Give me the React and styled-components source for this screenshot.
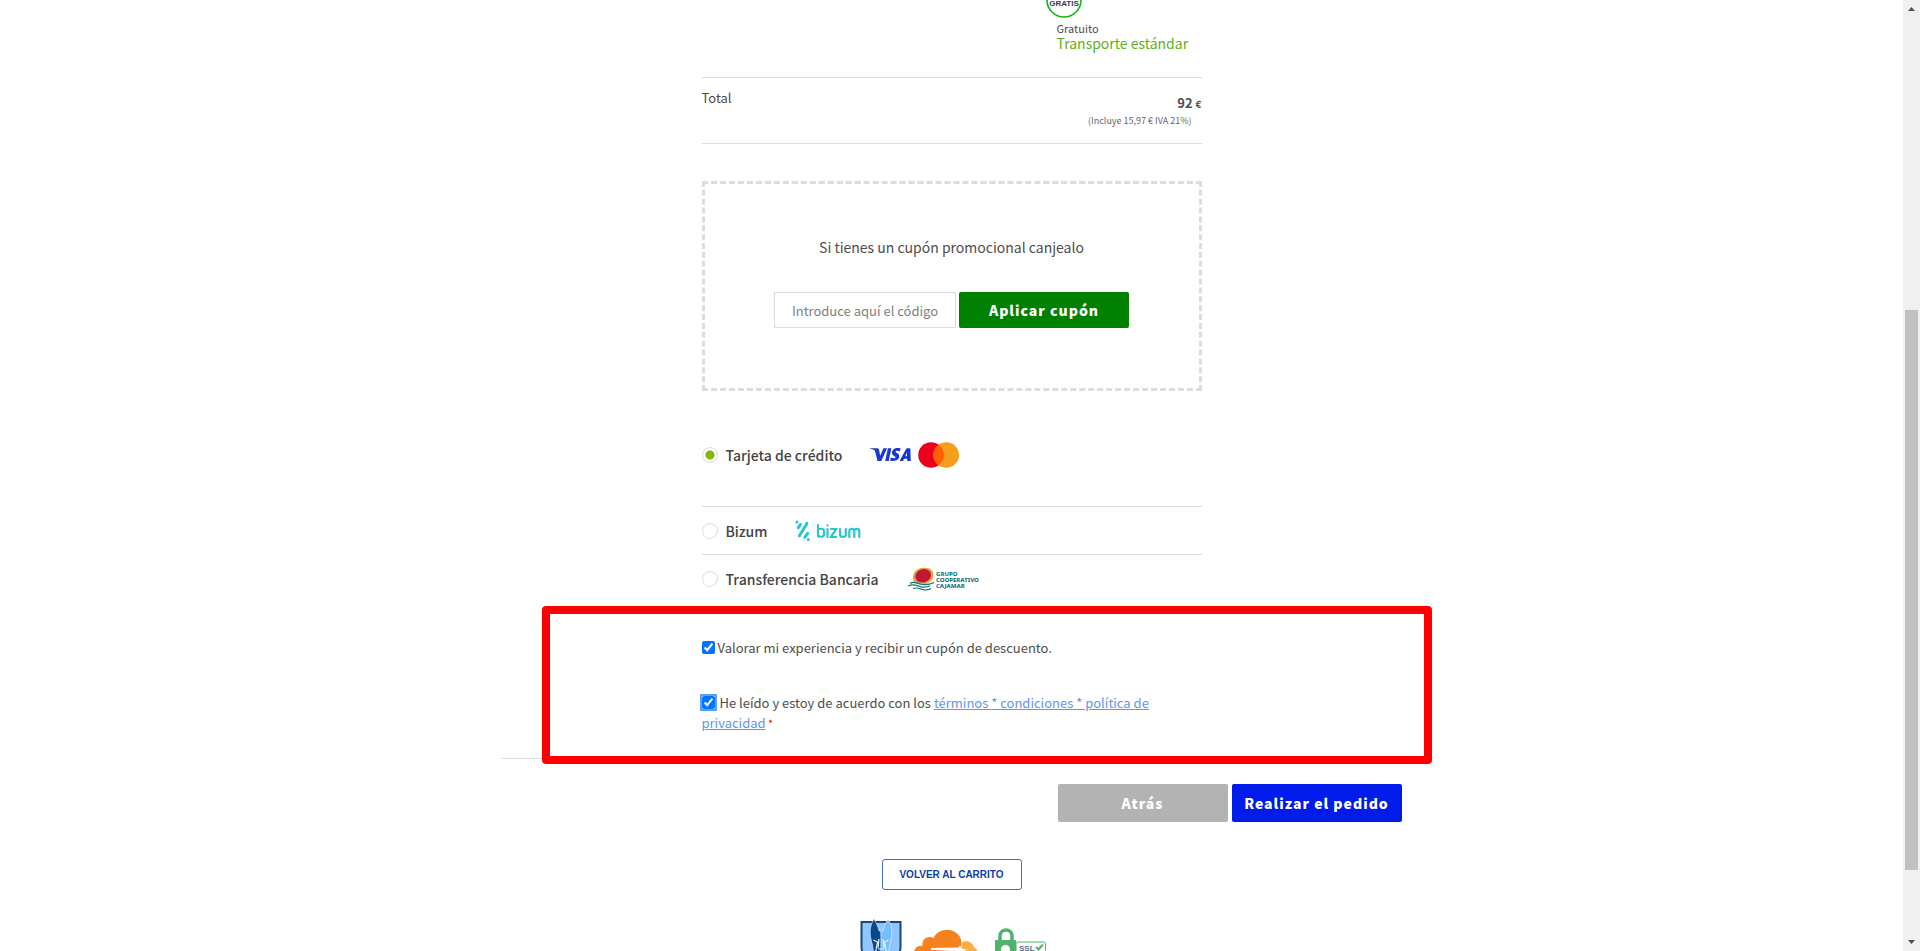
import React, { useState } from 'react';
import styled, { createGlobalStyle, css } from 'styled-components';

const GlobalStyle = createGlobalStyle`
  * {
    box-sizing: border-box;
  }
  body {
    margin: 0;
    overflow: hidden;
    background: #fff;
    color: #4d4d4d;
    font-family: 'Noto Sans CJK SC', 'Noto Sans', sans-serif;
    font-size: 13px;
    line-height: 20px;
  }
  button,
  input {
    font-family: inherit;
  }
`;

const Screen = styled.div`
  display: flex;
  height: 100vh;
  overflow: hidden;
`;

const Page = styled.main`
  flex: 1;
  min-width: 0;
  margin-top: -20px;
`;

const Checkout = styled.form`
  max-width: 900px;
  margin: 0 auto;
`;

const Column = styled.div`
  max-width: 500px;
  margin: 0 auto;
`;

const SummaryRow = styled.section`
  display: flex;
  justify-content: space-between;
  border-bottom: 1px solid #ddd;
  padding: ${(props) => props.$padding};
`;

const SummaryLabel = styled.span`
  font-size: 13px;
  line-height: 20px;
`;

const Shipping = styled.div`
  width: 156px;
`;

const FreeBadge = styled.svg`
  display: block;
  width: 36px;
  height: 36px;
  margin-bottom: 3px;
`;

const ShippingText = styled.div`
  padding-left: 11px;
  font-size: ${(props) => (props.$accent ? 14 : 11)}px;
  line-height: 15px;
  ${(props) => props.$accent && css`
    color: #5fb020;
  `}
`;

const Totals = styled.div`
  padding-top: 5px;
  text-align: right;
`;

const Price = styled.strong`
  display: block;
  font-size: 13px;
  line-height: 20px;

  small {
    font-size: 10px;
  }
`;

const Tax = styled.div`
  padding-right: 10px;
  color: #666;
  font-size: 9px;
  line-height: 14px;
`;

const Coupon = styled.section`
  display: flex;
  flex-direction: column;
  align-items: center;
  gap: 34px;
  margin-top: 37px;
  border: 3px dashed #ddd;
  padding: 52px 20px 60px;
`;

const CouponTitle = styled.label`
  font-size: 14px;
  line-height: 22px;
`;

const CouponFields = styled.div`
  display: flex;
  gap: 3px;
`;

const CouponInput = styled.input`
  width: 182px;
  height: 36px;
  border: 1px solid #ddd;
  padding: 0 10px;
  color: #4d4d4d;
  font-size: 13px;
  text-align: center;

  &::placeholder {
    color: #808080;
    opacity: 1;
  }
`;

const Button = styled.button`
  width: 170px;
  height: ${(props) => (props.$tall ? 38 : 36)}px;
  border: 0;
  border-radius: 2px;
  padding: 0;
  background: ${(props) => props.$color};
  color: #fff;
  font-size: 14px;
  font-weight: 900;
  letter-spacing: 1px;
`;

const Methods = styled.section`
  margin-top: 40px;
`;

const Method = styled.label`
  display: flex;
  align-items: center;
  min-height: 48px;
  color: #444;
  font-size: 14px;
  font-weight: 500;
  line-height: 24px;

  & + & {
    border-top: 1px solid #ddd;
  }
  ${(props) => props.$first && css`
    padding: 11px 0 38px;
  `}
`;

const Radio = styled.input`
  appearance: none;
  flex: none;
  width: 16px;
  height: 16px;
  margin: 0 8px 0 0;
  border: 1px solid #ddd;
  border-radius: 50%;
  background: #fff;

  &:checked {
    background: radial-gradient(circle, #83b800 0 4px, #fff 5px);
  }
`;

const MethodLogo = styled.svg`
  flex: none;
  margin-left: 28px;
`;

const Agreement = styled.section`
  position: relative;
  border-bottom: 1px solid #ddd;
  padding: 36px 0 25px;
`;

const Highlight = styled.div`
  position: absolute;
  top: 4px;
  right: -30px;
  bottom: -6px;
  left: 40px;
  border: 8px solid #f00;
  border-radius: 4px;
  pointer-events: none;
`;

const Consent = styled.div`
  max-width: 460px;
  color: #4d4d4d;
  font-size: 13px;
  line-height: 20px;

  & + & {
    margin-top: 35px;
  }
`;

const Checkbox = styled.input`
  width: 13px;
  height: 13px;
  margin: 0 ${(props) => (props.$focused ? 5 : 3)}px 0 0;
  accent-color: #0075ff;
  vertical-align: -1px;
  ${(props) => props.$focused && css`
    outline: 2px solid #5e9ef5;
  `}
`;

const TermsLink = styled.a`
  color: #6495ed;
  text-decoration: underline;
`;

const Required = styled.span`
  color: #f00;
  font-size: 11px;
`;

const Actions = styled.div`
  display: flex;
  justify-content: flex-end;
  gap: 4px;
  margin-top: 25px;
`;

const Footer = styled.footer`
  display: flex;
  flex-direction: column;
  align-items: center;
  gap: 28px;
  margin-top: 37px;
`;

const CartLink = styled.a`
  width: 140px;
  border: 1px solid #4468b5;
  border-radius: 3px;
  color: #0d3fa3;
  font-family: 'Liberation Sans', Arial, sans-serif;
  font-size: 10px;
  font-weight: 700;
  line-height: 29px;
  text-align: center;
  text-decoration: none;
`;

const Seals = styled.svg`
  width: 188px;
  height: 50px;
`;

const Scrollbar = styled.div`
  display: flex;
  flex: none;
  flex-direction: column;
  width: 17px;
  background: #f0f0f0;
`;

const ScrollArrow = styled.svg`
  display: block;
  width: 17px;
  height: 17px;
`;

const Track = styled.div`
  flex: 1;
  padding: 0 2px;
`;

const Thumb = styled.div`
  height: 100%;
  background: linear-gradient(transparent 32%, #c1c1c1 32% 93%, transparent 93%);
`;

const CardLogos = () => (
  <MethodLogo width="90" height="26" viewBox="0 0 90 26" aria-label="Visa Mastercard">
    <g fill="#1838cf">
      <path d="M0 6.2h7.1c1 0 1.7.5 1.9 1.5l1.2 6.1 3.2-7.6h3.7L11.300 19H7.600L4.900 8.800C4.100 7.700 2.300 7.100 0 6.700z" />
      <path d="M17.900 6.200h3.500L18.700 19h-3.500z" />
      <path d="M30.500 6.600 29.900 9.400c-1.700-.8-4.200-.8-4.300.3-.1 1.200 4 1.500 3.700 4.900-.3 3.500-4.900 5.400-9.200 3.800l.7-3c1.800 1 4.700 1.200 4.800 0 .1-1.300-3.900-1.600-3.600-4.900.3-3.900 5.100-5.200 8.500-3.900z" />
      <path fillRule="evenodd" d="m29.600 19 6.200-11.600c.4-.8.900-1.200 1.700-1.200h2.800L40.800 19h-3.500l-.2-2.200H34L33 19zm5.700-4.700h1.700l-.2-3.900z" />
    </g>
    <circle cx="61" cy="13" r="12.800" fill="#eb001b" />
    <circle cx="76.200" cy="13" r="12.800" fill="#f79e1b" />
    <path fill="#ff5f00" d="M68.600 2.700a12.800 12.800 0 0 1 0 20.600 12.800 12.800 0 0 1 0-20.600z" />
  </MethodLogo>
);

const BizumLogo = () => (
  <MethodLogo width="68" height="22" viewBox="0 0 68 22" aria-label="Bizum">
    <g fill="none" stroke="#2bc4cf" strokeLinecap="round">
      <g strokeWidth="3">
        <path d="M3.300 7.700 5.500 4.400M4.400 15.800l7.600-12.400M9.800 17.300l2.800-4" />
        <path d="M1.900 1.900h.1M13.200 19.600h.1" />
      </g>
      <g strokeWidth="2.200">
        <path d="M23 5v11.500M23 11c0-3 6-3 6 0v3.500c0 3-6 3-6 0" />
        <path d="M32.500 9v8M32.500 5.400v.1M36 9h5.200l-5.400 8h5.600" />
        <path d="M45 9v5.500c0 3.200 5.800 3.200 5.800 0V9M54.300 17v-6c0-2.800 5-2.800 5 0v6M59.300 11c0-2.800 5-2.800 5 0v6" />
      </g>
    </g>
  </MethodLogo>
);

const CajamarLogo = () => (
  <MethodLogo width="72" height="26" viewBox="0 0 72 26" aria-label="Grupo Cooperativo Cajamar">
    <path fill="#e9a23c" d="M8 5.500C11 2 16 1.500 20 2c5 .3 7 4 6 9-.7 4-4 6.500-9 7L8.500 17.500C5 13.500 5.500 8.500 8 5.500z" />
    <ellipse cx="16.300" cy="9.800" rx="8" ry="6.600" fill="#bf1836" transform="rotate(-20 16 10)" />
    <g fill="none" stroke="#14777a" strokeWidth="1.200">
      <path d="M3 17.500c4-3 8 .5 12 1s7 .5 12-2" />
      <path d="M1 20c6-3 9 0 13 .8s7 0 9-1" />
      <path d="M6 22.500c4-1.500 6 0 9 1 3 1 6 .5 9-1" />
    </g>
    <g fill="#14777a" fontFamily="Noto Sans, sans-serif" fontSize="6" fontWeight="800">
      <text x="29" y="10">GRUPO</text>
      <text x="29" y="16">COOPERATIVO</text>
      <text x="29" y="22">CAJAMAR</text>
    </g>
  </MethodLogo>
);

const SecuritySeals = () => (
  <Seals viewBox="0 0 188 50" aria-label="Sellos de seguridad">
    <path fill="#8fc6ff" stroke="#154a78" strokeWidth="2" d="M3.500 4h39v25c0 9-10 16-19.500 20C13.500 45 3.500 38 3.500 29z" />
    <path fill="#074a8c" stroke="#d8ecff" strokeWidth=".6" d="M23 13h-2c-1-5-3-8-5-12-3 5-4.500 10-3.500 18l2 8 2 14 6.500 6z" />
    <path fill="#74bdff" stroke="#e8f5ff" strokeWidth=".6" d="M23 13h2c1-5 3-8 5-12 3 5 4.500 10 3.500 18l-2 8-2 14-6.500 6z" />
    <path fill="none" stroke="#e5f3ff" strokeWidth="1.200" d="m15.500 22 4 2-1.500 8-1 6M30.500 22l-4 2 1.500 8 1 6M21 21l-1 9M25 21l1 9M20 31h6" />
    <path fill="#f6821f" d="M56.500 38c-2-7 3-11 8-10-1-7 5-11 11-8 4-8 15-11 23-5 4 3 5 7 5 11l-2 12z" />
    <path fill="#fbad41" d="M101.500 38l3-14c5-2 10 0 12 6 3 1 4 4 4 8z" />
    <path fill="#fff" d="m73 30 27-.5 2-2 2 3 6 1.500-6 1-2 3-2-2.500-27-1.800z" />
    <path fill="none" stroke="#50b36c" strokeWidth="3.500" d="M142 26v-8c0-8 12-8 12 0v8" />
    <rect x="137" y="22" width="21" height="28" rx="1" fill="#50b36c" />
    <path fill="#fff" d="M147.500 27c5 0 6 6 2 8l1 9h-6l1-9c-4-2-3-8 2-8z" />
    <rect x="158" y="24" width="29.500" height="20" rx="2" fill="#fff" stroke="#50b36c" />
    <text x="161" y="33" fill="#557086" fontFamily="Liberation Sans, sans-serif" fontSize="8" fontWeight="700">SSL</text>
    <path fill="none" stroke="#50b36c" strokeWidth="2" d="m178 29 2.500 2.500 4.500-5" />
  </Seals>
);

const methods = [
  { id: 'card', name: 'Tarjeta de crédito', Logo: CardLogos },
  { id: 'bizum', name: 'Bizum', Logo: BizumLogo },
  { id: 'transfer', name: 'Transferencia Bancaria', Logo: CajamarLogo },
];

const App = () => {
  const [method, setMethod] = useState('card');
  return (
    <Screen>
      <GlobalStyle />
      <Page>
        <Checkout onSubmit={(e) => e.preventDefault()}>
          <Column>
            <SummaryRow $padding="2px 0 26px">
              <SummaryLabel>Envío</SummaryLabel>
              <Shipping>
                <FreeBadge viewBox="0 0 36 36">
                  <circle cx="18" cy="18" r="17" fill="#fff" stroke="#12b812" strokeWidth="1.600" />
                  <text x="18" y="24" textAnchor="middle" fill="#3b3b4d" fontFamily="Liberation Sans, sans-serif" fontSize="8" fontWeight="700">GRATIS</text>
                </FreeBadge>
                <ShippingText>Gratuito</ShippingText>
                <ShippingText $accent>Transporte estándar</ShippingText>
              </Shipping>
            </SummaryRow>
            <SummaryRow $padding="10px 0 15px">
              <SummaryLabel>Total</SummaryLabel>
              <Totals>
                <Price>92 <small>€</small></Price>
                <Tax>(Incluye 15,97 € IVA 21%)</Tax>
              </Totals>
            </SummaryRow>
            <Coupon>
              <CouponTitle htmlFor="coupon">Si tienes un cupón promocional canjealo</CouponTitle>
              <CouponFields>
                <CouponInput id="coupon" type="text" placeholder="Introduce aquí el código" />
                <Button type="button" $color="#008000">Aplicar cupón</Button>
              </CouponFields>
            </Coupon>
            <Methods>
              {methods.map(({ id, name, Logo }, i) => (
                <Method key={id} $first={i === 0}>
                  <Radio
                    type="radio"
                    name="method"
                    checked={method === id}
                    onChange={() => setMethod(id)}
                  />
                  {name}
                  <Logo />
                </Method>
              ))}
            </Methods>
          </Column>
          <Agreement>
            <Column>
              <Consent>
                <Checkbox type="checkbox" id="review" defaultChecked />
                <label htmlFor="review">Valorar mi experiencia y recibir un cupón de descuento.</label>
              </Consent>
              <Consent>
                <Checkbox type="checkbox" id="terms" defaultChecked $focused />
                <label htmlFor="terms">He leído y estoy de acuerdo con los </label>
                <TermsLink href="#terms">términos * condiciones * política de privacidad</TermsLink>
                <Required> *</Required>
              </Consent>
            </Column>
            <Highlight />
          </Agreement>
          <Actions>
            <Button type="button" $tall $color="#b3b3b3">Atrás</Button>
            <Button type="submit" $tall $color="#001bea">Realizar el pedido</Button>
          </Actions>
        </Checkout>
        <Footer>
          <CartLink href="#cart">VOLVER AL CARRITO</CartLink>
          <SecuritySeals />
        </Footer>
      </Page>
      <Scrollbar>
        <ScrollArrow viewBox="0 0 17 17"><path fill="#505050" d="m5 11 3.500-4 3.500 4z" /></ScrollArrow>
        <Track><Thumb /></Track>
        <ScrollArrow viewBox="0 0 17 17"><path fill="#505050" d="m5 6 3.500 4L12 6z" /></ScrollArrow>
      </Scrollbar>
    </Screen>
  );
};

export default App;
